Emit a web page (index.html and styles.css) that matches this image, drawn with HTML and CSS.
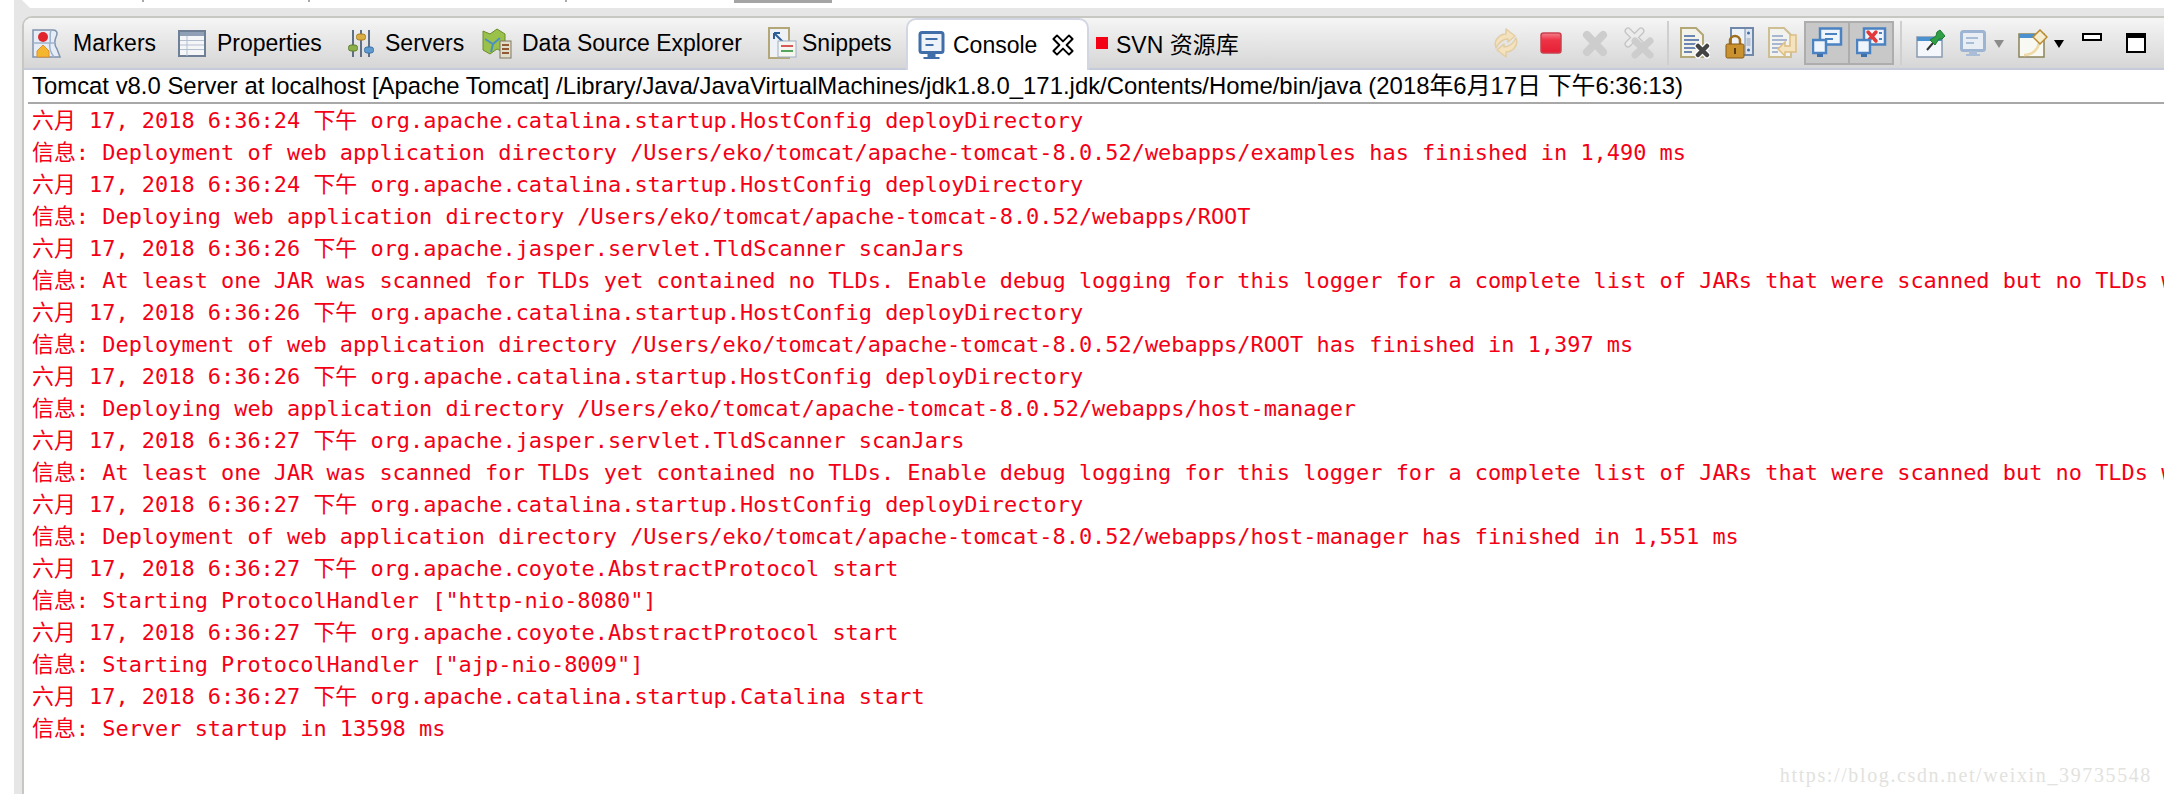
FILE: index.html
```html
<!DOCTYPE html>
<html lang="zh">
<head>
<meta charset="utf-8">
<title>Console</title>
<link rel="stylesheet" href="styles.css">
</head>
<body>
<svg class="defs" width="0" height="0" aria-hidden="true">
  <defs>
    <linearGradient id="gs" x1="0" y1="0" x2="0" y2="1"><stop offset="0" stop-color="#f4808c"/><stop offset=".35" stop-color="#ee3346"/><stop offset="1" stop-color="#e61f35"/></linearGradient>
    <g id="mon-pair">
      <rect x="1" y="13" width="13" height="13" fill="#f0f5fb" stroke="#4b82c2" stroke-width="2.500"/>
      <rect x="5" y="27" width="6" height="3" fill="#3f6ea8"/>
    </g>
  </defs>
</svg>
<div class="topstrip">
  <div class="edge"></div>
  <div class="topcard">
    <i class="tick tick-a"></i>
    <i class="tick tick-b"></i>
    <i class="tick tick-c"></i>
    <i class="tick-bar"></i>
  </div>
</div>
<div class="frame">
  <div class="edge"></div>
  <main class="panel">
    <header class="tabbar">
      <nav class="tabs">
        <div class="tab tab-1">
          <svg class="ico i-markers" viewBox="0 0 29 29"><path d="M1 1h20c4 0 5 3 3 7-2 5-2 8 1 12l3 8H1z" fill="#e6edf6" stroke="#7f93ad" stroke-width="1.500"/><path d="M1 14h22M19 1c-2 5 0 9-1 13s1 10 4 14" fill="none" stroke="#9fb2cc" stroke-width="1.500"/><circle cx="11" cy="8" r="5" fill="#e0262c"/><path d="M11 16l6 6v6H5v-6z" fill="#f4b62e" stroke="#e0902a"/></svg>
          <span>Markers</span>
        </div>
        <div class="tab tab-2">
          <svg class="ico i-table" viewBox="0 0 28 27"><rect x="1" y="1" width="26" height="25" fill="#f5f6f8" stroke="#6e7f96" stroke-width="2"/><rect x="2" y="2" width="24" height="4" fill="#8f9fb5"/><path d="M2 10.500h24M2 15h24M2 19.500h24M9 6v20" stroke="#b4bfd0"/></svg>
          <span>Properties</span>
        </div>
        <div class="tab tab-3">
          <svg class="ico i-servers" viewBox="0 0 26 29"><path d="M5 1v27M13 1v27M21 1v27" stroke="#5f6f85" stroke-width="2"/><rect x="0.500" y="16" width="9" height="6" rx="2.500" fill="#8bb04a" stroke="#64802f"/><rect x="8.500" y="5" width="9" height="6" rx="2.500" fill="#dcae42" stroke="#a87f26"/><rect x="16.500" y="18" width="9" height="6" rx="2.500" fill="#5d9ad0" stroke="#3d74a8"/></svg>
          <span>Servers</span>
        </div>
        <div class="tab tab-4">
          <svg class="ico i-map" viewBox="0 0 30 31"><path d="M1 3l7 3 7-5 8 5v19l-8-4-7 5-7-4z" fill="#9ac24a" stroke="#6d8c2c"/><path d="M3 11l8 5 7-6M11 16l-2 8" stroke="#4d8fc2" stroke-width="2" fill="none"/><rect x="18" y="13" width="11" height="17" fill="#e2ddcb" stroke="#7c7661"/><path d="M20 17h7M20 21h7M20 25h7" stroke="#8f5a35" stroke-width="2"/></svg>
          <span>Data Source Explorer</span>
        </div>
        <div class="tab tab-5">
          <svg class="ico i-snip" viewBox="0 0 30 32"><path d="M2 1h20v30H2z" fill="#eef1f5" stroke="#b3a777" stroke-width="2"/><path d="M7 6l9 9M7 6v6M7 6h6" stroke="#2d5f97" stroke-width="2" fill="none"/><rect x="11" y="14" width="18" height="16" fill="#f6f6f0" stroke="#9db0c6"/><path d="M14 19h12" stroke="#d95757" stroke-width="2"/><path d="M14 24h12" stroke="#57a65f" stroke-width="2"/></svg>
          <span>Snippets</span>
        </div>
        <div class="tab tab-active">
          <svg class="ico i-console" viewBox="0 0 26 29"><rect x="1.500" y="1.500" width="23" height="20" rx="2" fill="#eef3fa" stroke="#3f6ea8" stroke-width="3"/><path d="M7 8h12M7 14h8" stroke="#3f6ea8" stroke-width="2"/><path d="M9 22h8v4h4v2H5v-2h4z" fill="#3f6ea8"/></svg>
          <span>Console</span>
          <svg class="close" viewBox="0 0 20 20"><path d="M2 5L5 2 10 7 15 2 18 5 13 10 18 15 15 18 10 13 5 18 2 15 7 10Z" fill="#fff" stroke="#000" stroke-width="1.600" stroke-linejoin="round"/></svg>
        </div>
        <div class="tab tab-svn">
          <i class="dot"></i>
          <span>SVN 资源库</span>
        </div>
      </nav>
      <div class="tools">
        <svg class="t-sync" viewBox="0 0 30 32"><path d="M5 21C2 13 9 7 15 7V2l9 7-7 6v-3c-5 0-9 3-12 9z" fill="#f3e2bd" stroke="#e3cda2" stroke-width="1.500" stroke-linejoin="round"/><path d="M25 11c3 8-4 14-10 14v5l-9-7 7-6v3c5 0 9-3 12-9z" fill="#f3e2bd" stroke="#e3cda2" stroke-width="1.500" stroke-linejoin="round"/></svg>
        <svg class="t-stop" viewBox="0 0 22 22"><rect x="1" y="1" width="20" height="20" rx="2.500" fill="url(#gs)" stroke="#c9404d" stroke-width="1.500"/></svg>
        <svg class="t-x" viewBox="0 0 26 27"><path d="M5 5L21 22M21 5L5 22" stroke="#cdcdcd" stroke-width="8" stroke-linecap="round" fill="none"/></svg>
        <svg class="t-xx" viewBox="0 0 30 32"><path d="M4 4L17 17M17 4L4 17" stroke="#c4c4c4" stroke-width="7" stroke-linecap="round" fill="none"/><path d="M4 4L17 17M17 4L4 17" stroke="#ececec" stroke-width="4.500" stroke-linecap="round" fill="none"/><path d="M11 14L26 28M26 14L11 28" stroke="#cdcdcd" stroke-width="7" stroke-linecap="round" fill="none"/></svg>
        <i class="sep"></i>
        <svg class="t-doc" viewBox="0 0 30 32"><path d="M1 1h15l7 7v22H1z" fill="#f4f3ea" stroke="#b3a777" stroke-width="2"/><path d="M4 9h11M4 13h15M4 17h12M4 21h12M4 25h8" stroke="#6d87b5" stroke-width="2"/><path d="M18 19L27 28M27 19L18 28" stroke="#fff" stroke-width="7" stroke-linecap="round"/><path d="M18 19L27 28M27 19L18 28" stroke="#444" stroke-width="4.500" stroke-linecap="round"/></svg>
        <svg class="t-lock" viewBox="0 0 29 32"><rect x="6" y="1" width="22" height="27" fill="#eef3fa" stroke="#7089ab" stroke-width="2"/><rect x="20" y="2" width="7" height="25" fill="#dfe6f0"/><path d="M20 1v27" stroke="#7089ab"/><rect x="21.500" y="11" width="4" height="8" fill="#b9c5d5"/><circle cx="23.500" cy="6" r="1.500" fill="#3f6ea8"/><circle cx="23.500" cy="23" r="1.500" fill="#3f6ea8"/><path d="M5 18v-4a5 5 0 0 1 10 0v4" fill="none" stroke="#a06f1e" stroke-width="2.500"/><rect x="1" y="17" width="18" height="14" rx="1.500" fill="#c9922f" stroke="#86591a"/><rect x="9" y="21" width="2" height="6" fill="#5a3c10"/></svg>
        <svg class="t-word" viewBox="0 0 30 32"><path d="M1 1h15l7 7v22H1z" fill="#f2f2ee" stroke="#cdbf92" stroke-width="2"/><path d="M4 9h11M4 13h15M4 17h12M4 21h8M4 25h6" stroke="#a7b7d2" stroke-width="2"/><path d="M28 8v17H17v4l-7-7 7-7v4h5V8z" fill="#f5e3bd" stroke="#dcbd84" stroke-width="1.500"/></svg>
        <div class="toggles">
          <div class="toggle">
            <svg class="t-dup" viewBox="0 0 31 32"><rect x="8" y="1.500" width="21" height="16" fill="#f0f5fb" stroke="#4b82c2" stroke-width="2.500"/><path d="M13 7h12M13 12h8" stroke="#4b82c2" stroke-width="2"/><use href="#mon-pair"/></svg>
          </div>
          <div class="toggle">
            <svg class="t-dup" viewBox="0 0 31 32"><rect x="8" y="1.500" width="21" height="16" fill="#f0f5fb" stroke="#4b82c2" stroke-width="2.500"/><path d="M12 5L20 14M20 5L12 14" stroke="#e23a3a" stroke-width="3.500" stroke-linecap="round"/><path d="M23 6h3M23 12h3" stroke="#4b82c2" stroke-width="2"/><use href="#mon-pair"/></svg>
          </div>
        </div>
        <i class="sep sep-2"></i>
        <svg class="t-pin" viewBox="0 0 29 29"><rect x="1" y="8" width="25" height="20" fill="#f4f7fb" stroke="#8a9bb0" stroke-width="1.500"/><rect x="1" y="8" width="25" height="4" fill="#4b90cf"/><path d="M11 21l6-7" stroke="#333" stroke-width="2"/><path d="M14 11l6-4 1-4 3-2 5 6-3 3-3 0-4 6z" fill="#2f9e45" stroke="#1f7a32"/></svg>
        <svg class="t-mon" viewBox="0 0 26 26"><rect x="1.500" y="1.500" width="23" height="19" rx="2" fill="#e9eef5" stroke="#9db4d2" stroke-width="3"/><path d="M6 8h12M6 13h8" stroke="#a9bdd6" stroke-width="2"/><path d="M9 21h8v3h3v2H6v-2h3z" fill="#a9bdd6"/></svg>
        <i class="caret caret-grey"></i>
        <svg class="t-new" viewBox="0 0 30 29"><rect x="1" y="5" width="25" height="23" fill="#f8f9f2" stroke="#8c8358" stroke-width="1.500"/><rect x="1" y="5" width="25" height="4" fill="#4b90cf"/><path d="M6 26c9 0 14-6 15-12" stroke="#eed9a8" stroke-width="2.500" fill="none"/><path d="M22 1l7 7-7 7-7-7z" fill="#f6ecd0" stroke="#b98b2e" stroke-width="1.500"/></svg>
        <i class="caret"></i>
        <i class="win-min"></i>
        <i class="win-max"></i>
      </div>
    </header>
    <div class="status">Tomcat v8.0 Server at localhost [Apache Tomcat] /Library/Java/JavaVirtualMachines/jdk1.8.0_171.jdk/Contents/Home/bin/java (2018年6月17日 下午6:36:13)</div>
    <pre class="log">六月 17, 2018 6:36:24 下午 org.apache.catalina.startup.HostConfig deployDirectory
信息: Deployment of web application directory /Users/eko/tomcat/apache-tomcat-8.0.52/webapps/examples has finished in 1,490 ms
六月 17, 2018 6:36:24 下午 org.apache.catalina.startup.HostConfig deployDirectory
信息: Deploying web application directory /Users/eko/tomcat/apache-tomcat-8.0.52/webapps/ROOT
六月 17, 2018 6:36:26 下午 org.apache.jasper.servlet.TldScanner scanJars
信息: At least one JAR was scanned for TLDs yet contained no TLDs. Enable debug logging for this logger for a complete list of JARs that were scanned but no TLDs were found in them.
六月 17, 2018 6:36:26 下午 org.apache.catalina.startup.HostConfig deployDirectory
信息: Deployment of web application directory /Users/eko/tomcat/apache-tomcat-8.0.52/webapps/ROOT has finished in 1,397 ms
六月 17, 2018 6:36:26 下午 org.apache.catalina.startup.HostConfig deployDirectory
信息: Deploying web application directory /Users/eko/tomcat/apache-tomcat-8.0.52/webapps/host-manager
六月 17, 2018 6:36:27 下午 org.apache.jasper.servlet.TldScanner scanJars
信息: At least one JAR was scanned for TLDs yet contained no TLDs. Enable debug logging for this logger for a complete list of JARs that were scanned but no TLDs were found in them.
六月 17, 2018 6:36:27 下午 org.apache.catalina.startup.HostConfig deployDirectory
信息: Deployment of web application directory /Users/eko/tomcat/apache-tomcat-8.0.52/webapps/host-manager has finished in 1,551 ms
六月 17, 2018 6:36:27 下午 org.apache.coyote.AbstractProtocol start
信息: Starting ProtocolHandler ["http-nio-8080"]
六月 17, 2018 6:36:27 下午 org.apache.coyote.AbstractProtocol start
信息: Starting ProtocolHandler ["ajp-nio-8009"]
六月 17, 2018 6:36:27 下午 org.apache.catalina.startup.Catalina start
信息: Server startup in 13598 ms</pre>
    <div class="watermark">https://blog.csdn.net/weixin_39735548</div>
  </main>
</div>
</body>
</html>
```
FILE: styles.css
```css
html, body { margin: 0; padding: 0; height: 100%; background: #fff; overflow: hidden; }
body { display: flex; flex-direction: column; font-family: "Liberation Sans", "Noto Sans CJK SC", sans-serif; }
.defs { position: absolute; }

.topstrip { height: 16px; flex: none; display: flex; align-items: flex-start; background: #e6e6e6; }
.edge { width: 14px; flex: none; align-self: stretch; background: #fff; }
.topcard { flex: 1; height: 8px; margin-left: 8px; display: flex; align-items: flex-start; background: #fff; clip-path: polygon(0 0, 100% 0, 100% 100%, 8px 100%); }
.tick { width: 2px; height: 2px; background: #a8a8a8; flex: none; }
.tick-a { margin-left: 120px; }
.tick-b { margin-left: 164px; }
.tick-c { margin-left: 255px; }
.tick-bar { width: 98px; height: 3px; background: #a4a4a4; margin-left: 167px; flex: none; }

.frame { flex: 1; display: flex; min-height: 0; background: #e6e6e6; }
.panel { flex: 1; min-width: 0; margin-left: 8px; position: relative; display: flex; flex-direction: column; border-left: 2px solid #c8c8c2; border-top: 2px solid #c8c8c2; border-top-left-radius: 10px; background: #fff; overflow: hidden; }

.tabbar { height: 52px; flex: none; display: flex; justify-content: space-between; align-items: stretch; box-sizing: border-box; border-bottom: 2px solid #c6cbdc; background: linear-gradient(#f5f5f5, #d6d6d6); }
.tabs { display: flex; align-items: stretch; padding-left: 8px; }
.tab { display: flex; align-items: center; font-size: 23px; color: #000; white-space: nowrap; box-sizing: border-box; flex: none; }
.tab-1 { width: 146px; gap: 12px; }
.tab-2 { width: 170px; gap: 11px; }
.tab-3 { width: 134px; gap: 11px; }
.tab-4 { width: 285px; gap: 10px; }
.tab-5 { width: 139px; gap: 5px; }
.ico { flex: none; }
.i-markers { width: 29px; height: 29px; }
.i-table { width: 28px; height: 27px; }
.i-servers { width: 26px; height: 29px; }
.i-map { width: 30px; height: 31px; }
.i-snip { width: 30px; height: 32px; }
.i-console { width: 29px; height: 29px; }

.tab-active { width: 183px; height: 52px; padding-left: 9px; gap: 7px; background: #fff; border-radius: 10px 10px 0 0; border: 2px solid #d2d6e2; border-bottom: 0; }
.close { width: 24px; height: 24px; margin-left: 7px; flex: none; }
.tab-svn { padding-left: 7px; gap: 8px; }
.dot { width: 12px; height: 12px; background: #f40016; flex: none; }

.tools { display: flex; align-items: center; padding-right: 18px; }
.tools svg { flex: none; }
.t-sync { width: 30px; height: 32px; }
.t-stop { width: 22px; height: 22px; margin-left: 19px; }
.t-x { width: 26px; height: 27px; margin-left: 20px; }
.t-xx { width: 30px; height: 32px; margin-left: 16px; }
.sep { width: 2px; height: 44px; background: #cfcfcf; margin-left: 13px; flex: none; }
.sep-2 { margin-left: 6px; }
.t-doc { width: 30px; height: 32px; margin-left: 11px; }
.t-lock { width: 29px; height: 32px; margin-left: 15px; }
.t-word { width: 30px; height: 32px; margin-left: 14px; }
.toggles { display: flex; flex: none; margin-left: 6px; height: 44px; box-sizing: border-box; border: 2px solid #adadad; background: #adadad; gap: 2px; }
.toggle { width: 42px; display: flex; align-items: center; justify-content: center; background: #c8c8c8; }
.t-dup { width: 31px; height: 32px; }
.t-pin { width: 29px; height: 29px; margin-left: 14px; }
.t-mon { width: 26px; height: 26px; margin-left: 15px; }
.caret { width: 0; height: 0; border: 5px solid transparent; border-top: 8px solid #000; border-bottom: 0; flex: none; margin-left: 6px; margin-top: 2px; }
.caret-grey { border-top-color: #8c8c8c; margin-left: 8px; }
.t-new { width: 30px; height: 29px; margin-left: 14px; }
.win-min { width: 16px; height: 4px; border: 2px solid #000; background: #fff; flex: none; margin: -12px 0 0 18px; }
.win-max { width: 16px; height: 13px; border: 2px solid #000; border-top-width: 5px; background: #fff; flex: none; margin-left: 24px; }

.status { height: 34px; flex: none; box-sizing: border-box; margin-left: 4px; border-bottom: 2px solid #a8a8a8; padding-left: 4px; font-size: 23.900px; line-height: 32px; color: #000; white-space: nowrap; }
.log { margin: 0; padding: 1px 0 0 8px; font-family: "DejaVu Sans Mono", "Noto Sans CJK SC", monospace; font-size: 21.930px; line-height: 32px; color: #f40016; white-space: pre; }
.watermark { position: absolute; right: 12px; bottom: 7px; font-family: "Liberation Serif", serif; font-size: 20px; letter-spacing: 1.620px; color: #e2e2de; }
```
